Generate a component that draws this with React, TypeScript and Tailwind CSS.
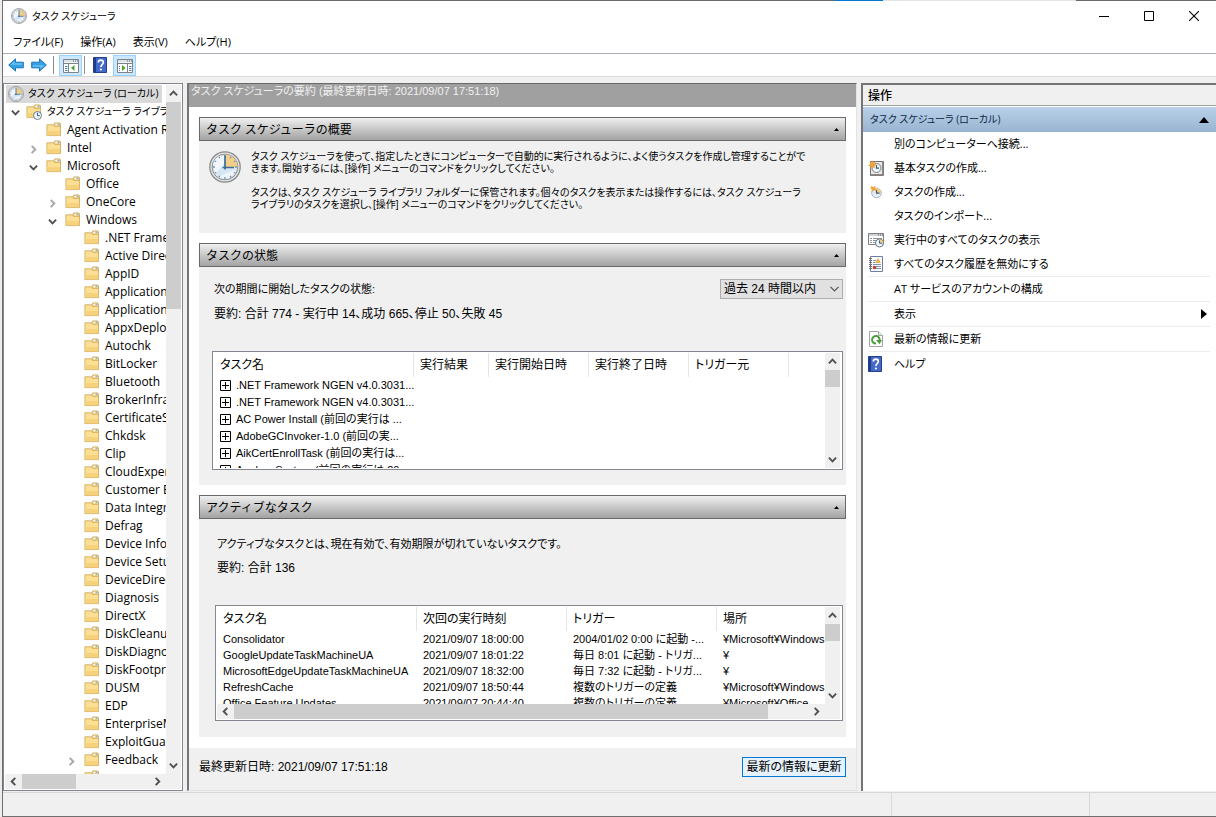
import React from "react";

const ui = "[font-family:'Open_Sans','Noto_Sans_CJK_JP',sans-serif] [font-feature-settings:'palt']";
const gothic = "[font-family:'Liberation_Sans','Noto_Sans_CJK_JP',sans-serif] [font-feature-settings:'palt']";

function Clock({ className }: { className: string }) {
  return (
    <svg viewBox="0 0 32 32" className={className} aria-hidden="true">
      <circle cx="16" cy="16" r="15.200" fill="#e6e6e6" stroke="#8a8a8a" strokeWidth="1.300" />
      <circle cx="16" cy="16" r="12.900" fill="#d7e6f2" stroke="#8e8e8e" strokeWidth="1" />
      <path d="M6 23 22 5 10 5 A12 12 0 0 0 4 14 Z" fill="#f6fafd" opacity=".8" />
      <path d="M9 26 27 18 A12 12 0 0 1 16 28 Z" fill="#f6fafd" opacity=".7" />
      <path d="M16 16 V3.600 A12.400 12.400 0 0 1 28.400 16 Z" fill="#f3cf85" />
      <g stroke="#6f93ba" strokeWidth="1.300">
        <path d="M16 4v2M16 26v2M4 16h2M26 16h2M10 5.700l.8 1.500M21.200 24.900l.8 1.500M5.700 10l1.500.800M24.900 21.200l1.500.800M5.700 22l1.500-.8M10 26.300l.8-1.500M22 5.700l-.8 1.500M26.300 10l-1.500.800" />
      </g>
      <path d="M16 4.500v14M13.500 16.500h11.500" fill="none" stroke="#3a6c9e" strokeWidth="1.700" />
    </svg>
  );
}

function Folder({ clock = false }: { clock?: boolean }) {
  return (
    <svg viewBox="0 0 16 16" className="size-4 shrink-0" aria-hidden="true">
      <path d="M7.500 3.500 8.800.900h5l.7 1v3h-7z" fill="#f0d690" stroke="#c9a352" strokeWidth=".8" />
      <path d="M9.500 1.800h3.800v1.400H9.500z" fill="#fff" />
      <path d="M11.500 1.800h1.800v1h-1.800z" fill="#4f94cf" />
      <path d="M.900 2.800h6.600l1 1.500h6v9.300H.900z" fill="#fbdf94" stroke="#d0a650" strokeWidth=".8" />
      <path d="M1.300 9h12.800v4.200H1.300z" fill="#f6d27d" />
      {clock && (
        <g>
          <circle cx="11.500" cy="11.500" r="4" fill="#eef5fa" stroke="#68737b" strokeWidth=".9" />
          <path d="M11.500 8.800v2.900h2.300" fill="none" stroke="#2c5f94" strokeWidth="1" />
        </g>
      )}
    </svg>
  );
}

function Arrow({ flip = false }: { flip?: boolean }) {
  return (
    <svg viewBox="0 0 16 14" className={flip ? "h-3.5 w-4 rotate-180" : "h-3.5 w-4"} aria-hidden="true">
      <path d="M.700 7 7.500.900v3.300h7.800v5.600H7.500v3.300z" fill="#35a0e4" stroke="#1b75b8" strokeWidth="1" />
      <path d="M2.500 6.800 6.500 3.200v2h7.600v1.600z" fill="#6cc0f3" />
    </svg>
  );
}

function PaneIcon({ right = false }: { right?: boolean }) {
  return (
    <svg viewBox="0 0 16 14" className="h-3.5 w-4" aria-hidden="true">
      <path d="M.5.5h15v13H.5z" fill="#fff" stroke="#7d858c" />
      <path d="M1 1h14v2.500H1z" fill="#dfe3e6" />
      <path d="M10 2h1M12 2h1M14 2h1" stroke="#59636b" />
      <path d="M1 4.500h14" stroke="#7d858c" />
      {right ? (
        <g>
          <path d="M10.500 5v8" stroke="#7d858c" />
          <path d="M2 7.500h1M2 9.500h1M2 11.500h1M12 7.500h2.500M12 9.500h2.500M12 11.500h2.500" stroke="#5482b8" />
          <path d="M5 6l3.500 3L5 12z" fill="#4aa32f" />
        </g>
      ) : (
        <g>
          <path d="M5.500 5v8" stroke="#7d858c" />
          <path d="M2 7.500h2.500M2 9.500h2.500M2 11.500h2.500" stroke="#5482b8" />
          <path d="M11.500 6 8 9l3.500 3z" fill="#4aa32f" />
        </g>
      )}
    </svg>
  );
}

function HelpIcon() {
  return (
    <svg viewBox="0 0 14 16" className="h-4 w-3.5" aria-hidden="true">
      <path d="M.5.500h13v15H.5z" fill="#4469c8" stroke="#23418e" />
      <path d="M.5.500h2.500v15H.5z" fill="#1f3c8c" />
      <path d="M5.300 5.600c0-3.200 5-3.200 5 0 0 2-2.400 2-2.400 4.300" fill="none" stroke="#fff" strokeWidth="1.700" />
      <circle cx="7.900" cy="12.500" r="1.100" fill="#fff" />
    </svg>
  );
}

function Star() {
  return <path d="M4 0l1 2.500L7.500 1.500 6.500 4 9 5 6.500 6 7 8.500 4.500 7 2.500 9V6.500L0 5.500 2.500 4 1 1.500l2.500 1z" fill="#f0a336" />;
}

type IconName = "basic" | "create" | "running" | "history" | "refresh" | "help";

function ActionIcon({ name }: { name: IconName }) {
  if (name === "help") return <HelpIcon />;
  return (
    <svg viewBox="0 0 16 16" className="size-4" aria-hidden="true">
      {name === "basic" && (
        <g>
          <path d="M2.500 1.500h13v14h-13z" fill="#e8e8e8" stroke="#76706c" />
          <path d="M3 14h12v1.500H3zM14 2h1.500v13H14z" fill="#8f8a86" />
          <circle cx="8.500" cy="8" r="4.500" fill="#eef5fb" stroke="#7a7f84" />
          <path d="M8.500 5v3.200H11" fill="none" stroke="#2c5f94" strokeWidth="1.200" />
          <Star />
        </g>
      )}
      {name === "create" && (
        <g>
          <circle cx="8.500" cy="9" r="4.800" fill="#e1ecf4" stroke="#a9b4bc" />
          <path d="M8.500 9V4.500A4.500 4.500 0 0 1 13 9z" fill="#f5cf7c" />
          <path d="M8.500 6v3.200h3" fill="none" stroke="#45566a" strokeWidth="1.200" />
          <path d="M3 2l2 1 2.500-1L7 4l2 2-3 .500L3.500 8l.2-2.500L2.500 4z" fill="#f0a336" />
        </g>
      )}
      {name === "running" && (
        <g>
          <path d="M.5 1.500h15v11H.5z" fill="#fff" stroke="#7b7f83" />
          <path d="M1 2h14v2H1z" fill="#cfd3d6" />
          <path d="M10 3h1M12 3h1M14 3h1" stroke="#555" />
          <path d="M2 6.500h2M5 6.500h9M2 8.500h2M5 8.500h3M2 10.500h2M5 10.500h2" stroke="#92979b" />
          <circle cx="11.500" cy="11" r="4" fill="#eef5fb" stroke="#70767b" />
          <path d="M11.500 11V7.500A3.500 3.500 0 0 1 15 11z" fill="#f5cf7c" />
          <path d="M11.500 8.500v2.700H14" fill="none" stroke="#2c5f94" />
        </g>
      )}
      {name === "history" && (
        <g>
          <path d="M2.500.500h12v15h-12z" fill="#fff" stroke="#6c7fa0" />
          <path d="M1 2.500h3M1 4.500h3M1 6.500h3M1 8.500h3M1 10.500h3M1 12.500h3" stroke="#6d7277" />
          <path d="M10 2l3 5H7z" fill="#f2b04a" />
          <path d="M5 4.500h3M5 6.500h2M5 8.500h8M8 10.500h5M8 12.500h5" stroke="#7e93b8" />
          <circle cx="6.500" cy="11.500" r="1.800" fill="#c23b32" />
        </g>
      )}
      {name === "refresh" && (
        <g>
          <path d="M1.500.500h9l4 4v11h-13z" fill="#fff" stroke="#a1a5a8" />
          <path d="M10.500.500v4h4" fill="#eee" stroke="#a1a5a8" />
          <path d="M8 12.600A3.800 3.800 0 1 1 11.600 9.500" fill="none" stroke="#4a9c3c" strokeWidth="2" />
          <path d="M8 9h6l-2.500 4.200z" fill="#4a9c3c" />
        </g>
      )}
    </svg>
  );
}

type Dir = "up" | "down" | "left" | "right";
const rotations: Record<Dir, string> = { up: "", down: "rotate-180", left: "-rotate-90", right: "rotate-90" };

function Chevron({ dir, light = false }: { dir: Dir; light?: boolean }) {
  return (
    <svg viewBox="0 0 9 9" className={`size-[9px] ${rotations[dir]}`} aria-hidden="true">
      <path d="M.900 6.300 4.500 2.700l3.600 3.600" fill="none" stroke={light ? "#a6a6a6" : "#505050"} strokeWidth="1.900" />
    </svg>
  );
}

function ScrollButton({ dir, label }: { dir: Dir; label: string }) {
  return (
    <button type="button" aria-label={label} className="flex size-[17px] shrink-0 items-center justify-center">
      <Chevron dir={dir} />
    </button>
  );
}

function VScroll({ thumb }: { thumb: string }) {
  return (
    <div className="flex w-[15px] shrink-0 flex-col items-center bg-[#f0f0f0]">
      <ScrollButton dir="up" label="上へスクロール" />
      <div className="w-full flex-1">
        <div className={`w-full bg-[#cdcdcd] ${thumb}`} />
      </div>
      <ScrollButton dir="down" label="下へスクロール" />
    </div>
  );
}

function HScroll({ thumb }: { thumb: string }) {
  return (
    <div className="flex h-[15px] min-w-0 flex-1 items-center bg-[#f0f0f0]">
      <ScrollButton dir="left" label="左へスクロール" />
      <div className="h-full flex-1">
        <div className={`h-full bg-[#cdcdcd] ${thumb}`} />
      </div>
      <ScrollButton dir="right" label="右へスクロール" />
    </div>
  );
}

type Node = { name: string; level: 1 | 2 | 3; state?: "open" | "closed" };
const windowsFolders = [
  ".NET Framework", "Active Directory Rights", "AppID", "Application Experience", "ApplicationData",
  "AppxDeploymentClient", "Autochk", "BitLocker", "Bluetooth", "BrokerInfrastructure",
  "CertificateServicesClient", "Chkdsk", "Clip", "CloudExperienceHost", "Customer Experience",
  "Data Integrity Scan", "Defrag", "Device Information", "Device Setup", "DeviceDirectoryClient",
  "Diagnosis", "DirectX", "DiskCleanup", "DiskDiagnostic", "DiskFootprint", "DUSM", "EDP",
  "EnterpriseMgmt", "ExploitGuard",
];
const nodes: Node[] = [
  { name: "Agent Activation Runtime", level: 1 },
  { name: "Intel", level: 1, state: "closed" },
  { name: "Microsoft", level: 1, state: "open" },
  { name: "Office", level: 2 },
  { name: "OneCore", level: 2, state: "closed" },
  { name: "Windows", level: 2, state: "open" },
  ...windowsFolders.map((name): Node => ({ name, level: 3 })),
  { name: "Feedback", level: 3, state: "closed" },
  { name: "", level: 3 },
];
const indents = { 1: "pl-[23px]", 2: "pl-[42px]", 3: "pl-[61px]" };

function Tree() {
  return (
    <nav aria-label="コンソール ツリー" className="flex w-[180px] shrink-0 flex-col border border-[#828790] bg-white p-px">
      <div className="flex min-h-0 flex-1">
        <ul className={`min-w-0 flex-1 overflow-hidden pl-px text-xs ${ui}`}>
          <li className="mr-1 flex h-[18px] items-center gap-1 bg-[#d9d9d9] pl-0.5 text-[10px] whitespace-nowrap">
            <Clock className="size-4 shrink-0" />
            <span>タスク スケジューラ (ローカル)</span>
          </li>
          <li className="flex h-[18px] items-center pl-[3px] text-[10px] whitespace-nowrap">
            <button type="button" aria-label="折りたたむ" className="flex w-[17px] shrink-0 pl-0.5"><Chevron dir="down" /></button>
            <Folder clock />
            <span className="pl-[5px]">タスク スケジューラ ライブラリ</span>
          </li>
          {nodes.map((n) => (
            <li key={n.name} className={`flex h-[18px] items-center whitespace-nowrap ${indents[n.level]}`}>
              <span className="flex w-[17px] shrink-0 pt-0.5">
                {n.state && (
                  <button type="button" aria-label={n.state === "open" ? "折りたたむ" : "展開する"}>
                    <Chevron dir={n.state === "open" ? "down" : "right"} light={n.state === "closed"} />
                  </button>
                )}
              </span>
              <Folder />
              <span className="pl-[5px]">{n.name}</span>
            </li>
          ))}
        </ul>
        <VScroll thumb="h-[207px]" />
      </div>
      <div className="flex bg-[#f0f0f0] pr-[15px]">
        <HScroll thumb="w-[54px]" />
      </div>
    </nav>
  );
}

function Section({ title, body, children }: { title: string; body: string; children: React.ReactNode }) {
  return (
    <section>
      <h2 className="flex h-6 items-center justify-between border border-[#696969] bg-linear-to-b from-[#f0f0f0] to-[#a3a3a3] px-1.5 text-xs [font-family:'Noto_Sans_CJK_JP',sans-serif] [font-feature-settings:normal]">
        {title}
        <button type="button" aria-label="折りたたむ">
          <svg viewBox="0 0 5 3" className="h-[3px] w-[5px]" aria-hidden="true"><path d="M0 3 2.500 0 5 3z" /></svg>
        </button>
      </h2>
      <div className={`bg-[#f0f0f0] ${body}`}>{children}</div>
    </section>
  );
}

const statusRows = [
  ".NET Framework NGEN v4.0.3031...",
  ".NET Framework NGEN v4.0.3031...",
  "AC Power Install (前回の実行は ...",
  "AdobeGCInvoker-1.0 (前回の実...",
  "AikCertEnrollTask (前回の実行は...",
  "AnalyzeSystem (前回の実行は 20",
];

const activeRows = [
  ["Consolidator", "2021/09/07 18:00:00", "2004/01/02 0:00 に起動 -...", "¥Microsoft¥Windows"],
  ["GoogleUpdateTaskMachineUA", "2021/09/07 18:01:22", "毎日 8:01 に起動 - トリガ...", "¥"],
  ["MicrosoftEdgeUpdateTaskMachineUA", "2021/09/07 18:32:00", "毎日 7:32 に起動 - トリガ...", "¥"],
  ["RefreshCache", "2021/09/07 18:50:44", "複数のトリガーの定義", "¥Microsoft¥Windows"],
  ["Office Feature Updates", "2021/09/07 20:44:40", "複数のトリガーの定義", "¥Microsoft¥Office"],
];

const th = "border-r border-[#e5e5e5] pl-1.5 text-left font-normal whitespace-nowrap";

function StatusTable() {
  return (
    <div className="flex h-[119px] border border-[#828790] bg-white p-px pr-0.5">
      <div className="min-w-0 flex-1 overflow-hidden">
        <table className="w-full table-fixed border-separate border-spacing-0">
          <thead>
            <tr className="h-6">
              <th className={`w-[200px] ${th}`}>タスク名</th>
              <th className={`w-[75px] ${th}`}>実行結果</th>
              <th className={`w-[100px] ${th}`}>実行開始日時</th>
              <th className={`w-[100px] ${th}`}>実行終了日時</th>
              <th className={`w-[100px] ${th}`}>トリガー元</th>
              <th aria-label="空白" />
            </tr>
          </thead>
          <tbody className="text-[11px]">
            {statusRows.map((r, i) => (
              <tr key={i}>
                <td className="p-0">
                  <div className="flex h-[17px] items-center gap-[5px] pl-1.5 whitespace-nowrap">
                    <button type="button" aria-label="展開する" className="shrink-0">
                      <svg viewBox="0 0 11 11" className="size-[11px]" aria-hidden="true">
                        <path d="M.5.5h10v10H.5zM2 5.500h7M5.500 2v7" fill="none" stroke="#000" />
                      </svg>
                    </button>
                    {r}
                  </div>
                </td>
                <td colSpan={5} className="p-0" />
              </tr>
            ))}
          </tbody>
        </table>
      </div>
      <VScroll thumb="h-[17px]" />
    </div>
  );
}

function ActiveTable() {
  return (
    <div className="border border-[#828790] bg-white p-px pr-0.5">
      <div className="flex h-[97px]">
        <div className="min-w-0 flex-1 overflow-hidden">
          <table className="w-full table-fixed border-separate border-spacing-0">
            <thead>
              <tr className="h-6">
                <th className={`w-[200px] ${th}`}>タスク名</th>
                <th className={`w-[150px] ${th}`}>次回の実行時刻</th>
                <th className={`w-[150px] ${th}`}>トリガー</th>
                <th className={`border-r-0 ${th}`}>場所</th>
              </tr>
            </thead>
            <tbody className="text-[11px]">
              {activeRows.map((r) => (
                <tr key={r[0]}>
                  {r.map((c, i) => (
                    <td key={i} className="h-4 overflow-hidden py-0 pr-0 pl-1.5 leading-4 whitespace-nowrap">{c}</td>
                  ))}
                </tr>
              ))}
            </tbody>
          </table>
        </div>
        <VScroll thumb="h-[17px]" />
      </div>
      <div className="flex bg-[#f0f0f0] pr-[15px]">
        <HScroll thumb="w-[93%]" />
      </div>
    </div>
  );
}

function Main() {
  return (
    <main className={`flex min-w-0 flex-1 flex-col border-t border-r border-b border-l-2 border-t-[#696969] border-r-[#e3e3e3] border-b-[#e3e3e3] border-l-[#757575] bg-white text-xs ${gothic}`}>
      <h1 className="h-[23px] shrink-0 bg-[#a0a0a0] pl-0.5 text-[11px] leading-[15px] text-[#f0f0f0]">
        タスク スケジューラの要約 (最終更新日時: 2021/09/07 17:51:18)
      </h1>
      <div className="flex min-h-0 flex-1 flex-col gap-2.5 overflow-hidden p-2.5">
        <Section title="タスク スケジューラの概要" body="flex h-[92px] gap-2.5 px-2.5 pt-2.5 text-[10px] leading-3">
          <Clock className="size-8 shrink-0" />
          <div className="flex flex-col gap-3">
            <p>
              タスク スケジューラを使って、指定したときにコンピューターで自動的に実行されるように、よく使うタスクを作成し管理することがで
              <br />きます。開始するには、[操作] メニューのコマンドをクリックしてください。
            </p>
            <p>
              タスクは、タスク スケジューラ ライブラリ フォルダーに保管されます。個々のタスクを表示または操作するには、タスク スケジューラ
              <br />ライブラリのタスクを選択し、[操作] メニューのコマンドをクリックしてください。
            </p>
          </div>
        </Section>
        <Section title="タスクの状態" body="h-[218px] pt-3 pr-[3px] pl-[13px]">
          <div className="flex h-5 items-center justify-between">
            <label htmlFor="period" className="pl-0.5 text-[11px]">次の期間に開始したタスクの状態:</label>
            <div className="relative flex w-[123px] items-center">
              <select id="period" className="h-5 w-full appearance-none border border-[#adadad] bg-[#e1e1e1] pl-[3px] leading-4">
                <option>過去 24 時間以内</option>
              </select>
              <svg viewBox="0 0 9 6" className="pointer-events-none absolute right-1 h-1.5 w-[9px]" aria-hidden="true">
                <path d="M.5.800 4.500 4.800 8.500.800" fill="none" stroke="#555" strokeWidth="1.200" />
              </svg>
            </div>
          </div>
          <p className="pt-[7px] pb-[29px] pl-0.5 leading-4">要約: 合計 774 - 実行中 14、成功 665、停止 50、失敗 45</p>
          <StatusTable />
        </Section>
        <Section title="アクティブなタスク" body="h-[218px] pt-[17px] pr-[3px] pl-4">
          <p className="pl-0.5 text-[11px] leading-4">アクティブなタスクとは、現在有効で、有効期限が切れていないタスクです。</p>
          <p className="pt-2 pb-[29px] pl-0.5 leading-4">要約: 合計 136</p>
          <ActiveTable />
        </Section>
      </div>
      <footer className="flex h-[42px] shrink-0 items-center justify-between bg-[#f0f0f0] px-2.5 pb-1">
        <span>最終更新日時: 2021/09/07 17:51:18</span>
        <button type="button" className="h-5 w-[104px] border border-[#0078d7] bg-[#e5f1fb]">最新の情報に更新</button>
      </footer>
    </main>
  );
}

const actions: { label: string; icon?: IconName; line?: boolean; sub?: boolean }[] = [
  { label: "別のコンピューターへ接続..." },
  { label: "基本タスクの作成...", icon: "basic" },
  { label: "タスクの作成...", icon: "create" },
  { label: "タスクのインポート..." },
  { label: "実行中のすべてのタスクの表示", icon: "running" },
  { label: "すべてのタスク履歴を無効にする", icon: "history", line: true },
  { label: "AT サービスのアカウントの構成", line: true },
  { label: "表示", line: true, sub: true },
  { label: "最新の情報に更新", icon: "refresh", line: true },
  { label: "ヘルプ", icon: "help" },
];

function Actions() {
  return (
    <aside className={`w-[355px] shrink-0 border-t-2 border-l-2 border-[#757575] bg-white text-[11px] ${ui}`}>
      <h2 className="h-[21px] border-b border-[#a0a0a0] bg-[#f0f0f0] pl-[5px] text-xs leading-[22px] font-medium">操作</h2>
      <h3 className="mt-px flex h-[25px] items-center justify-between bg-linear-to-b from-[#b9d1ea] to-[#99b4d1] px-[7px] text-[10px] text-[#0f2742]">
        タスク スケジューラ (ローカル)
        <button type="button" aria-label="折りたたむ">
          <svg viewBox="0 0 10 6" className="h-1.5 w-2.5" fill="#000" aria-hidden="true"><path d="M0 6 5 0l5 6z" /></svg>
        </button>
      </h3>
      <ul className="pr-1.5 pl-[5px]">
        {actions.map((a) => (
          <li key={a.label} className={a.line ? "border-b border-[#ececec]" : ""}>
            <button type="button" className="flex h-6 w-full items-center text-left whitespace-nowrap">
              <span className="w-[26px] shrink-0">{a.icon && <ActionIcon name={a.icon} />}</span>
              <span className="flex-1">{a.label}</span>
              {a.sub && (
                <svg viewBox="0 0 6 10" className="mr-[3px] h-2.5 w-1.5" aria-hidden="true"><path d="M0 0l6 5-6 5z" /></svg>
              )}
            </button>
          </li>
        ))}
      </ul>
    </aside>
  );
}

const winBtn = "flex h-[30px] w-[45px] items-center justify-center";

export default function App() {
  return (
    <div className="flex h-screen bg-[#ececec] pl-0.5 text-black">
      <div className="flex min-w-0 flex-1 flex-col border-b border-l border-[#6f6f6f] bg-[#f0f0f0]">
        <div className="flex h-px shrink-0">
          <div className="flex-1 bg-[#6a6a6a]" />
          <div className="w-12 bg-[#0078d7]" />
          <div className="w-[193px] bg-[#e3e3e3]" />
          <div className="w-[140px] bg-[#6a6a6a]" />
        </div>
        <header className={`flex h-[30px] shrink-0 items-center bg-white pl-2 text-[10px] ${ui}`}>
          <Clock className="size-4" />
          <span className="flex-1 pl-[5px]">タスク スケジューラ</span>
          <button type="button" aria-label="最小化" className={winBtn}>
            <svg viewBox="0 0 10 10" className="size-2.5"><path d="M0 5.500h10" stroke="#000" /></svg>
          </button>
          <button type="button" aria-label="最大化" className={winBtn}>
            <svg viewBox="0 0 10 10" className="size-2.5"><path d="M.5.5h9v9h-9z" fill="none" stroke="#000" /></svg>
          </button>
          <button type="button" aria-label="閉じる" className={winBtn}>
            <svg viewBox="0 0 10 10" className="size-2.5"><path d="M0 0l10 10M10 0 0 10" stroke="#000" strokeWidth="1.100" /></svg>
          </button>
        </header>
        <div role="menubar" className={`flex h-[22px] shrink-0 items-center gap-[17px] bg-white pl-2.5 text-[11px] ${ui}`}>
          <button type="button" role="menuitem">ファイル(F)</button>
          <button type="button" role="menuitem">操作(A)</button>
          <button type="button" role="menuitem">表示(V)</button>
          <button type="button" role="menuitem">ヘルプ(H)</button>
        </div>
        <div role="toolbar" aria-label="ツール バー" className="flex h-6 shrink-0 items-center border-t border-b border-t-[#acacb4] border-b-[#d8d8d8] bg-white pl-[5px]">
          <button type="button" aria-label="戻る"><Arrow /></button>
          <button type="button" aria-label="進む" className="ml-[7px]"><Arrow flip /></button>
          <div className="ml-1.5 h-[18px] w-px bg-[#8c8c8c]" />
          <button type="button" aria-label="コンソール ツリーの表示" className="ml-[5px] flex h-[21px] w-[23px] items-center justify-center border border-[#99d1ff] bg-[#cce8ff] pt-0.5"><PaneIcon /></button>
          <div className="ml-0.5 h-[18px] w-px bg-[#8c8c8c]" />
          <button type="button" aria-label="ヘルプ" className="ml-2"><HelpIcon /></button>
          <button type="button" aria-label="操作ウィンドウの表示" className="ml-1.5 flex h-[21px] w-[23px] items-center justify-center border border-[#99d1ff] bg-[#cce8ff] pt-0.5"><PaneIcon right /></button>
        </div>
        <div className="flex min-h-0 flex-1 gap-1 pt-1.5">
          <Tree />
          <Main />
          <Actions />
        </div>
        <div role="status" className="mt-px flex h-6 shrink-0 border-t border-[#d8d8d8]">
          <div className="flex-1" />
          <div className="w-[198px] border-l border-[#d8d8d8]" />
          <div className="w-[127px] border-l border-[#d8d8d8]" />
        </div>
      </div>
    </div>
  );
}
